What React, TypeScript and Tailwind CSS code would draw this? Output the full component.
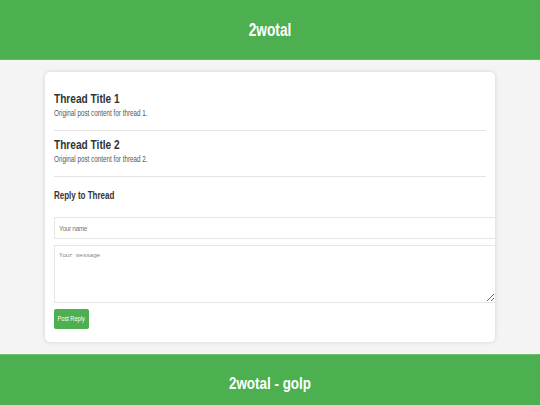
const threads = [
  { title: 'Thread Title 1', body: 'Original post content for thread 1.' },
  { title: 'Thread Title 2', body: 'Original post content for thread 2.' },
]

// the reference type is a squeezed Arial, so text runs are narrowed with scale-x
export default function App() {
  return (
    <div
      className="min-h-[405px] bg-[#f4f4f4] text-[#333]"
      style={{ fontFamily: '"Liberation Sans", Arial, sans-serif' }}
    >
      <header className="flex h-[60px] items-center justify-center border-b border-[#62bb66] bg-[#4caf50]">
        <h1 className="inline-block scale-x-[0.76] text-[18px] leading-[20px] font-bold text-white">2wotal</h1>
      </header>

      <main className="px-[45px] pt-[12px] pb-[12px]">
        <section className="rounded-[5px] bg-white px-[9px] pt-[19px] pb-[13px] shadow-[0_0_4px_rgba(0,0,0,0.14)]">
          {threads.map((thread) => (
            <article
              key={thread.title}
              className="mb-[6px] border-b border-[#e4e4e4] pb-[11px]"
            >
              <h2 className="text-[13.5px] leading-[16px] font-bold text-[#333]">
                <span className="inline-block origin-left scale-x-[0.75]">{thread.title}</span>
              </h2>
              <p className="mt-[1px] text-[9px] leading-[11px] text-[#555]">
                <span className="inline-block origin-left scale-x-[0.7]">{thread.body}</span>
              </p>
            </article>
          ))}

          <h3 className="mt-[12px] text-[10.5px] leading-[13px] font-bold text-[#333]">
            <span className="inline-block origin-left scale-x-[0.76]">Reply to Thread</span>
          </h3>

          <form className="mt-[15px] flex flex-col">
            <input
              type="text"
              placeholder="Your name"
              className="box-content h-[20px] w-full border border-[#e6e6e6] px-[4px] text-[6.5px] tracking-[-0.35px] outline-none placeholder:text-[#777]"
            />
            <textarea
              placeholder="Your message"
              className="mt-[6px] box-content h-[46px] w-full border border-[#e6e6e6] px-[4px] py-[5px] text-[6.2px] tracking-[-0.3px] outline-none placeholder:text-[#888]"
              style={{ fontFamily: '"Liberation Mono", "DejaVu Sans Mono", monospace' }}
            />
            <button
              type="button"
              className="mt-[6px] flex h-[20px] w-[35px] items-center justify-center rounded-[2px] bg-[#4caf50] text-[7.5px] text-white"
            >
              <span className="inline-block shrink-0 scale-x-[0.75] whitespace-nowrap">Post Reply</span>
            </button>
          </form>
        </section>
      </main>

      <footer className="flex h-[58px] items-center justify-center border-t border-[#6cc070] bg-[#4caf50]">
        <p className="inline-block scale-x-[0.79] text-[17px] leading-[20px] font-bold text-white">2wotal - golp</p>
      </footer>
    </div>
  )
}
